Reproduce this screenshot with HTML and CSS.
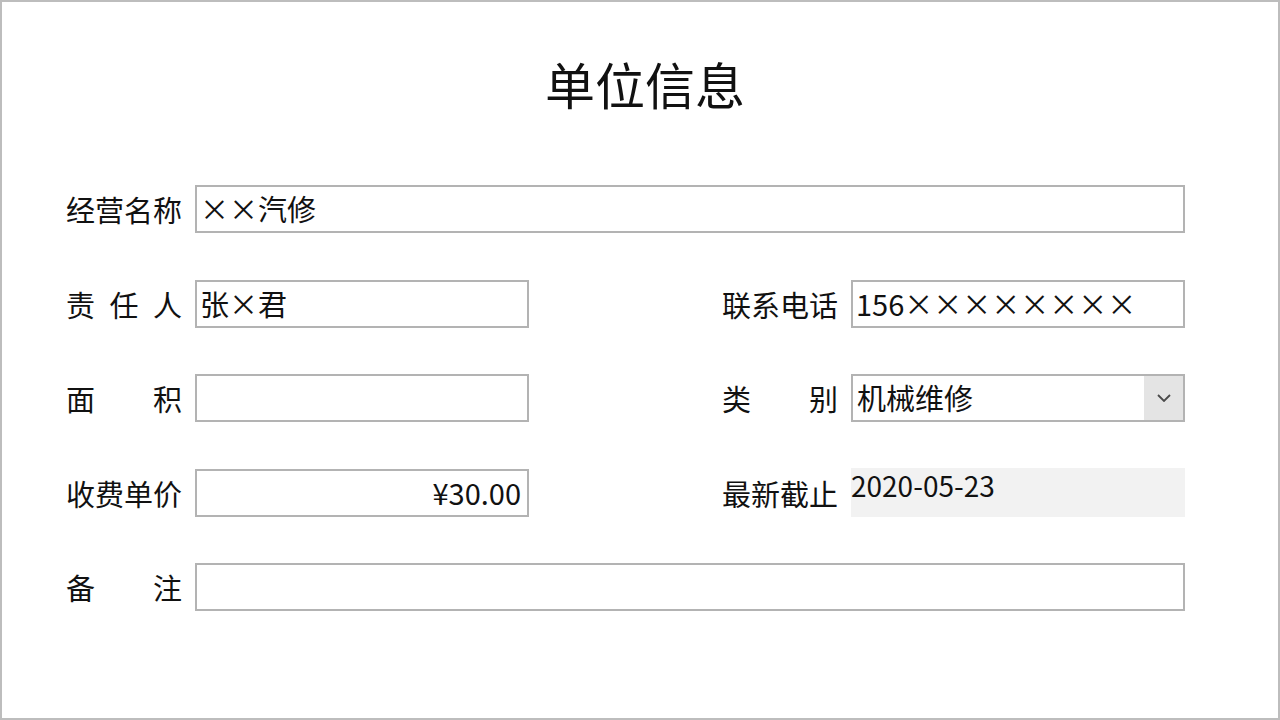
FILE: index.html
```html
<!DOCTYPE html>
<html lang="zh-CN">
<head>
<meta charset="utf-8">
<title>单位信息</title>
<link rel="stylesheet" href="styles.css">
</head>
<body>
<div class="frame">
  <h1 class="title">单位信息</h1>
  <div class="form">
    <div class="row">
      <label class="label">经营名称</label>
      <div class="box"><span class="fw">××</span>汽修</div>
    </div>
    <div class="row split">
      <div class="pair">
        <label class="label spread"><span>责</span><span>任</span><span>人</span></label>
        <div class="box">张<span class="fw">×</span>君</div>
      </div>
      <div class="pair">
        <label class="label">联系电话</label>
        <div class="box">156<span class="fw">××××××××</span></div>
      </div>
    </div>
    <div class="row split">
      <div class="pair">
        <label class="label spread"><span>面</span><span>积</span></label>
        <div class="box"></div>
      </div>
      <div class="pair">
        <label class="label spread"><span>类</span><span>别</span></label>
        <div class="box select">
          <span class="select-text">机械维修</span>
          <span class="select-btn">
            <svg width="14" height="8" viewBox="0 0 14 8"><path d="M1 1 L7 7 L13 1" fill="none" stroke="#4a4a4a" stroke-width="1.8"/></svg>
          </span>
        </div>
      </div>
    </div>
    <div class="row split">
      <div class="pair">
        <label class="label">收费单价</label>
        <div class="box right">¥30.00</div>
      </div>
      <div class="pair">
        <label class="label">最新截止</label>
        <div class="readonly">2020-05-23</div>
      </div>
    </div>
    <div class="row">
      <label class="label spread"><span>备</span><span>注</span></label>
      <div class="box"></div>
    </div>
  </div>
</div>
</body>
</html>
```
FILE: styles.css
```css
* { box-sizing: border-box; }
html, body { margin: 0; padding: 0; background: #ffffff; }
body {
  font-family: "Noto Sans CJK SC", "Noto Sans", sans-serif;
  color: #111;
}
.frame {
  width: 1280px;
  height: 720px;
  border: 2px solid #bdbdbd;
  background: #fff;
  padding-top: 56px;
}
.title {
  margin: 0;
  font-size: 50px;
  line-height: 50px;
  font-weight: 400;
  text-align: center;
  padding-left: 10px;
  color: #111;
}
.form {
  margin-top: 77px;
  margin-left: 64px;
  width: 1119px;
  display: flex;
  flex-direction: column;
  gap: 46.5px;
}
.row {
  display: flex;
  align-items: center;
  height: 48px;
}
.row.split { justify-content: space-between; }
.pair {
  display: flex;
  align-items: center;
  width: 463px;
  height: 48px;
}
.label {
  width: 116px;
  flex: none;
  font-size: 29px;
  line-height: 36px;
  margin-right: 13px;
  white-space: nowrap;
  color: #111;
}
.label.spread {
  display: flex;
  justify-content: space-between;
}
.box {
  flex: 1;
  height: 48px;
  border: 2px solid #b3b3b3;
  background: #fff;
  font-size: 29px;
  line-height: 42px;
  padding-left: 3px;
  padding-right: 6px;
  white-space: nowrap;
  overflow: hidden;
  color: #111;
}
.box.right { text-align: right; }
.fw { font-variant-east-asian: full-width; font-feature-settings: "fwid" 1; }
.box.select {
  display: flex;
  align-items: stretch;
  padding-right: 0;
  padding-left: 4px;
}
.select-text { flex: 1; }
.select-btn {
  width: 39px;
  background: #e4e4e4;
  display: flex;
  align-items: center;
  justify-content: center;
}
.readonly {
  flex: 1;
  height: 49px;
  background: #f2f2f2;
  font-size: 28px;
  line-height: 34px;
  color: #111;
  white-space: nowrap;
}
```
